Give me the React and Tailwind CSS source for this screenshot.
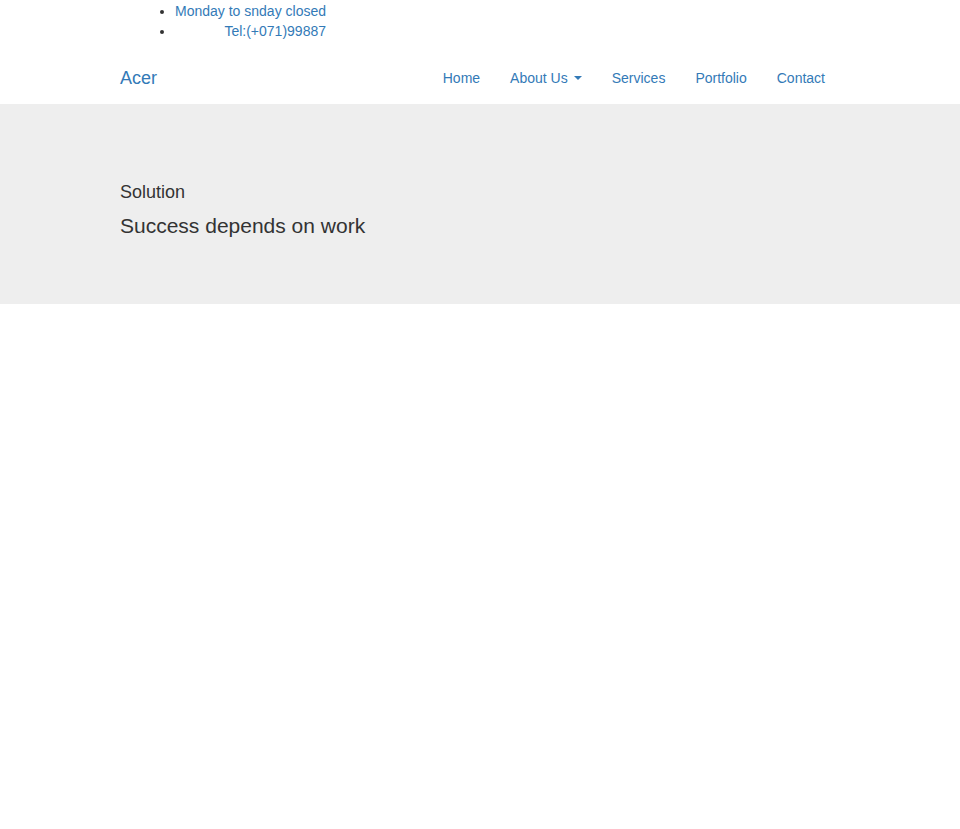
export default function App() {
  return (
    <div className="min-h-[829px] bg-white text-[14px] leading-[20px] text-[#333]" style={{ fontFamily: '"Liberation Sans", Arial, sans-serif' }}>
      <div className="mx-auto w-[750px] px-[15px] pt-[1px]">
        <ul className="ml-[15px] w-[191px] list-disc pl-[40px] text-right mb-[12px]">
          <li><a className="text-[#337ab7]">Monday to snday closed</a></li>
          <li><a className="text-[#337ab7]">Tel:(+071)99887</a></li>
        </ul>
      </div>
      <nav className="h-[51px]">
        <div className="mx-auto flex w-[750px] items-start justify-between px-[15px]">
          <a className="block h-[50px] text-[18px] leading-[20px] py-[15px] text-[#337ab7]">Acer</a>
          <ul className="flex">
            <li><a className="block px-[15px] py-[15px] text-[#337ab7]">Home</a></li>
            <li>
              <a className="flex items-center px-[15px] py-[15px] text-[#337ab7]">
                About Us
                <span className="ml-[6px] inline-block h-0 w-0 border-x-[4px] border-t-[4px] border-x-transparent border-t-[#337ab7]"></span>
              </a>
            </li>
            <li><a className="block px-[15px] py-[15px] text-[#337ab7]">Services</a></li>
            <li><a className="block px-[15px] py-[15px] text-[#337ab7]">Portfolio</a></li>
            <li><a className="block px-[15px] py-[15px] text-[#337ab7]">Contact</a></li>
          </ul>
        </div>
      </nav>
      <div className="h-[200px] bg-[#eeeeee]">
        <div className="mx-auto w-[750px] px-[15px] pt-[77px]">
          <p className="text-[18px] leading-[22px]">Solution</p>
          <p className="mt-[10px] text-[21px] leading-[26px]">Success depends on work</p>
        </div>
      </div>
    </div>
  );
}
